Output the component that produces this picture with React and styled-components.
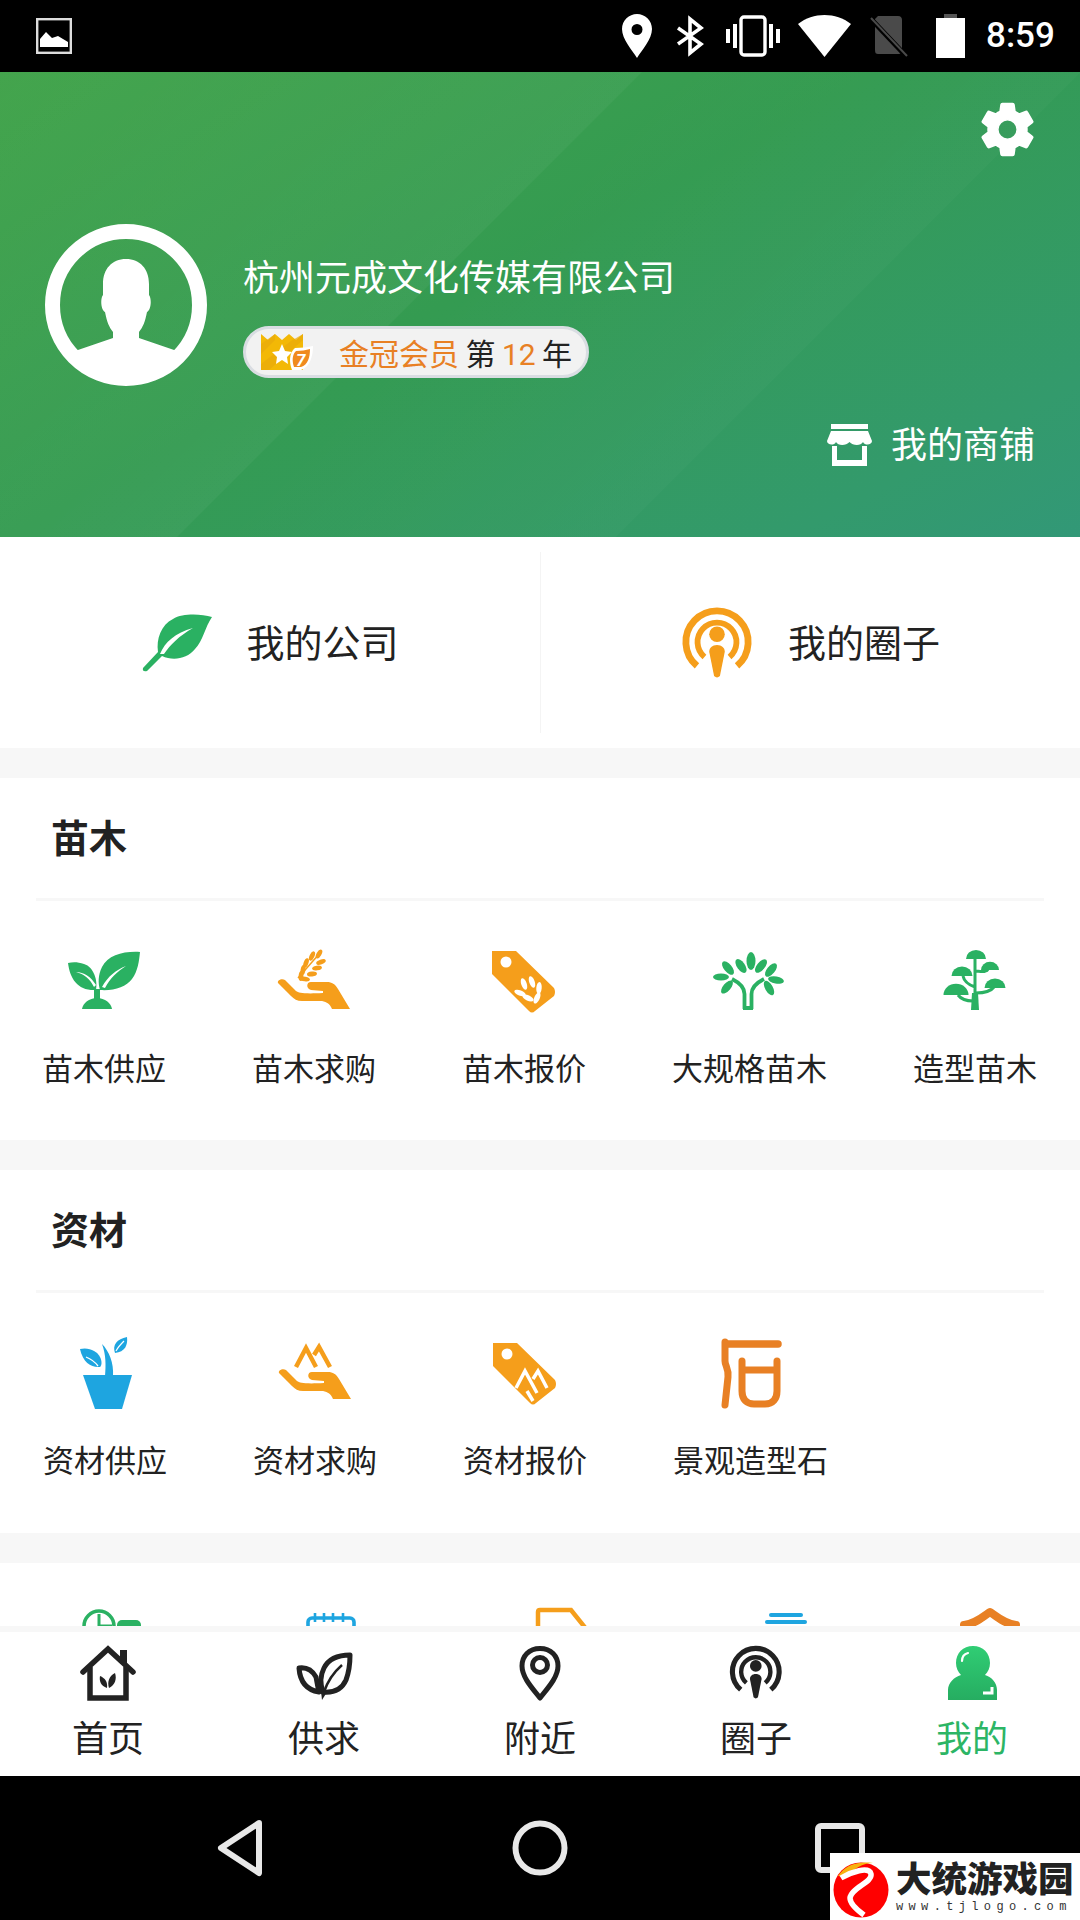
import React from "react";
import styled, { createGlobalStyle } from "styled-components";

const GREEN = "#2ab162";
const ORANGE = "#f59e1b";
const BLUE = "#1ea5e0";
const DEEP = "#e88024";
const INK = "#222222";

const Global = createGlobalStyle`
  html, body { margin: 0; padding: 0; background: #000; }
  * { box-sizing: border-box; }
  body { font-family: Roboto, "Noto Sans CJK SC", sans-serif; }
`;

const Page = styled.div`
  position: relative;
  width: 1080px;
  height: 1920px;
  display: flex;
  flex-direction: column;
  overflow: hidden;
  background: #f7f7f7;
  color: ${INK};
`;

const StatusBar = styled.div`
  height: 72px;
  flex: none;
  background: #000;
  display: flex;
  align-items: center;
  padding: 0 25px 0 36px;
`;
const StatusRight = styled.div`
  margin-left: auto;
  display: flex;
  align-items: center;
`;
const Glyph = styled.svg`
  display: block;
  flex: none;
  overflow: visible;
  margin-left: ${(p) => p.$ml || 0}px;
`;
const Clock = styled.span`
  margin-left: 21px;
  color: #fff;
  font-size: 35px;
  font-weight: 500;
  line-height: 40px;
  width: 69px;
`;

const Header = styled.header`
  height: 465px;
  flex: none;
  display: flex;
  flex-direction: column;
  padding: 30px 45px 0;
  color: #fff;
  background:
    linear-gradient(135deg, rgba(255,255,255,.005) 0%, rgba(255,255,255,.04) 41.5%, rgba(255,255,255,0) 41.6%, rgba(255,255,255,.02) 69.9%, rgba(255,255,255,0) 70%),
    linear-gradient(152deg, #43a44c 0%, #349b51 45%, #339a6c 85%, #329877 100%);
`;
const GearWrap = styled.div`
  align-self: flex-end;
  height: 55px;
`;
const Profile = styled.div`
  margin-top: 67px;
  display: flex;
  gap: 36px;
`;
const ProfileText = styled.div`
  padding-top: 30px;
  display: flex;
  flex-direction: column;
  align-items: flex-start;
`;
const CompanyName = styled.div`
  font-size: 36px;
  line-height: 50px;
`;
const Badge = styled.div`
  margin-top: 22px;
  height: 52px;
  width: 346px;
  border: 3px solid #d9dde2;
  border-radius: 26px;
  background: #f2f2f2;
  display: flex;
  align-items: center;
  padding-left: 15px;
  font-size: 30px;
  color: ${INK};
`;
const BadgeText = styled.span`
  margin-left: 26px;
  margin-bottom: 1px;
  white-space: pre;
  word-spacing: -1px;
`;
const Hot = styled.span`
  color: ${DEEP};
`;
const ShopRow = styled.div`
  margin-top: 37px;
  align-self: flex-end;
  display: flex;
  align-items: center;
  gap: 19px;
  font-size: 36px;
  line-height: 42px;
`;
const ShopLabel = styled.span`
  margin-top: 2px;
`;

const Scroll = styled.main`
  flex: 1;
  min-height: 0;
  overflow: hidden;
  display: flex;
  flex-direction: column;
  gap: 30px;
`;
const TopLinks = styled.section`
  display: grid;
  grid-template-columns: 1fr 1fr;
  height: 211px;
  flex: none;
  padding: 15px 0;
  background: #fff;
`;
const TopLink = styled.div`
  display: flex;
  align-items: center;
  justify-content: center;
  gap: 35px;
  font-size: 38px;
  color: ${INK};
  border-left: ${(p) => (p.$divided ? "1px solid #f4f4f4" : "none")};
`;
const TopLabel = styled.span`
  margin-bottom: 4px;
`;

const Section = styled.section`
  flex: none;
  background: #fff;
  height: ${(p) => p.$h}px;
`;
const SectionHead = styled.h2`
  margin: 0 36px;
  height: 123px;
  padding: 0 0 5px 15px;
  display: flex;
  align-items: center;
  border-bottom: 3px solid #f7f7f7;
  font-size: 38px;
  font-weight: 700;
  color: ${INK};
`;
const Items = styled.div`
  display: flex;
  gap: 86px;
  padding: 40px 0 0 ${(p) => p.$left}px;
`;
const Item = styled.div`
  display: flex;
  flex-direction: column;
  align-items: center;
  gap: 29px;
  font-size: 31px;
  line-height: 40px;
  white-space: nowrap;
  color: ${INK};
`;
const CutSection = styled.section`
  flex: none;
  height: 200px;
  background: #fff;
  display: flex;
  padding: 37px 0 0 72px;
`;
const CutCell = styled.div`
  margin-left: ${(p) => p.$gap}px;
`;

const TabBar = styled.nav`
  flex: none;
  height: 150px;
  background: #fff;
  border-top: 6px solid #f7f7f7;
  display: grid;
  grid-template-columns: repeat(5, 1fr);
`;
const Tab = styled.div`
  display: flex;
  flex-direction: column;
  align-items: center;
  padding-top: 8px;
  font-size: 36px;
  line-height: 44px;
  color: ${(p) => (p.$active ? "#2cb565" : INK)};
`;
const TabLabel = styled.span`
  margin-top: 14px;
`;

const NavBar = styled.div`
  flex: none;
  height: 144px;
  background: #000;
  display: grid;
  grid-template-columns: repeat(3, 300px);
  justify-content: center;
  justify-items: center;
  align-items: center;
`;

const Watermark = styled.div`
  position: absolute;
  right: 0;
  bottom: 0;
  width: 250px;
  height: 67px;
  background: #fff;
  display: flex;
  padding: 7px 0 0 3px;
`;
const MarkText = styled.div`
  margin-left: 7px;
  display: flex;
  flex-direction: column;
`;
const MarkName = styled.div`
  font-size: 35.5px;
  line-height: 40px;
  font-weight: 900;
  white-space: nowrap;
  color: #222;
  width: 178px;
`;
const MarkUrl = styled.div`
  font-family: "Liberation Mono", monospace;
  font-size: 12px;
  line-height: 14px;
  letter-spacing: 5.35px;
  color: #333;
  white-space: nowrap;
`;

const Icon = ({ s = 80, vb, children, w, h, ml }) => (
  <Glyph width={w || s} height={h || s} viewBox={vb || `0 0 ${w || s} ${h || s}`} $ml={ml}>
    {children}
  </Glyph>
);

const Grains = ({ pts, fill, rx = 6, ry = 2.7 }) =>
  pts.map(([x, y, a], i) => (
    <ellipse key={i} cx={x} cy={y} rx={rx} ry={ry} fill={fill} transform={`rotate(${a} ${x} ${y})`} />
  ));

const HandPath = ({ dy = 0 }) => (
  <path
    transform={`translate(0 ${dy})`}
    fill={ORANGE}
    d="M4 42C3 39 8 37 11 39L22 50C25 52 30 53 49 52L49 50L37 49C32 48 32 41 37 41L53 41C58 41 61 43 64 48L76 68L58 68C56 63 53 61 48 60L28 60C23 60 20 58 17 55Z"
  />
);

const Seedling = () => (
  <Icon>
    <g fill={GREEN}>
      <path d="M76 11C60 10 44 14 38 26C34 34 34 42 36 49C50 50 62 46 68 38C74 30 75 20 76 11Z" />
      <path d="M4 22C6 38 14 50 32 49C34 40 30 26 20 23C14 21 9 21 4 22Z" />
      <rect x="30" y="48" width="6" height="10" />
      <path d="M18 68C19 62 25 57 33 57C41 57 47 62 48 68Z" />
    </g>
    <path d="M38 46C44 35 52 29 62 25C53 31 46 37 41 47Z" fill="#fff" />
    <path d="M30 46C26 38 20 33 12 31C20 31 27 36 32 44Z" fill="#fff" />
  </Icon>
);
const WheatHand = () => (
  <Icon>
    <HandPath />
    <path d="M24 37L46 12" stroke={ORANGE} strokeWidth="1.5" />
    <Grains
      fill={ORANGE}
      rx={5}
      ry={2.4}
      pts={[
        [45, 13, -60], [38, 15, -65], [47, 21, -20], [32, 22, -70], [43, 27, -10],
        [29, 29, -80], [38, 33, -5], [27, 35, -85], [31, 38, 10],
      ]}
    />
  </Icon>
);
const TagShape = () => (
  <>
    <path fill={ORANGE} d="M8 10H32L70 47Q72 51 70 55L51 70Q48 73 45 70L8 33Z" />
    <circle cx="22" cy="21" r="5.5" fill="#fff" />
  </>
);
const WheatTag = () => (
  <Icon>
    <TagShape />
    <Grains
      fill="#fff"
      pts={[[40, 43, 70], [48, 41, 70], [36, 52, 20], [55, 47, 95], [44, 57, 25], [53, 57, 115]]}
    />
  </Icon>
);
const Tree = () => (
  <Icon>
    <g transform="translate(-2 0)">
      <g fill={GREEN}>
        {[
          [43, 20, 90, 9, 4.5], [33, 25, 55, 8, 4], [53, 25, -50, 8, 4], [20, 27, 50, 8, 4],
          [63, 29, -50, 8, 4], [13, 36, 0, 8, 3.5], [68, 39, 10, 8, 3.5], [19, 46, -50, 8, 3.8], [61, 47, 60, 8, 3.8],
        ].map(([x, y, a, rx, ry], i) => (
          <ellipse key={i} cx={x} cy={y} rx={rx} ry={ry} transform={`rotate(${a} ${x} ${y})`} />
        ))}
      </g>
      <path
        d="M36.5 68V53C36.5 45 30 41 24 38M43.500 68V53C43.500 45 50 41 56 38M35 67H45"
        fill="none"
        stroke={GREEN}
        strokeWidth="3.8"
      />
    </g>
  </Icon>
);
const Cap = ({ x, y, w }) => (
  <path d={`M${x - w / 2} ${y}A${w / 2} ${w / 2.2} 0 0 1 ${x + w / 2} ${y}Z`} fill={GREEN} />
);
const ShapedTree = () => (
  <Icon>
    <Cap x={41} y={18} w={20} />
    <Cap x={55} y={29} w={18} />
    <Cap x={27} y={35} w={21} />
    <Cap x={60} y={47} w={21} />
    <Cap x={21} y={54} w={25} />
    <path
      d="M40 18V56M40 30C44 30 52 32 53 28M40 46C34 44 29 40 28 35M41 52C48 52 56 50 59 46M38 60C32 60 26 58 23 54"
      fill="none"
      stroke={GREEN}
      strokeWidth="3"
    />
    <path d="M37 52H43L44 69H36Z" fill={GREEN} />
  </Icon>
);
const Pot = () => (
  <Icon>
    <g fill={BLUE}>
      <path d="M18 42H67L57 76H30Z" />
      <path d="M37 11C44 18 49 30 48 43H40C41 32 41 22 37 11Z" />
      <path d="M15 16C24 14 32 18 35 24C37 28 37 32 35 34C27 35 18 30 15 16Z" />
      <path d="M62 4C63 12 60 19 50 20C47 12 52 6 62 4Z" />
    </g>
    <path d="M21 24C26 26 30 29 33 33" stroke="#fff" strokeWidth="1.3" fill="none" />
    <path d="M59 8C56 11 53 14 51 18" stroke="#fff" strokeWidth="1.2" fill="none" />
  </Icon>
);
const RockHand = () => (
  <Icon>
    <HandPath dy={-2} />
    <path
      d="M21 34L31 15L41 34M39 22L44 14L55 34"
      fill="none"
      stroke={ORANGE}
      strokeWidth="4.5"
    />
  </Icon>
);
const RockTag = () => (
  <Icon>
    <TagShape />
    <path
      d="M31 55L40 38L52 60M48 46L53 38L62 55M42 58L48 68"
      fill="none"
      stroke="#fff"
      strokeWidth="3.5"
    />
  </Icon>
);
const Stone = () => (
  <Icon>
    <g fill="none" stroke={DEEP} strokeLinecap="round" strokeLinejoin="round">
      <path strokeWidth="7.5" d="M15 11H67" />
      <path strokeWidth="7" d="M14 9V28C14 33 18 36 17 44L14 72" />
      <path strokeWidth="7" d="M31 28V58C31 67 36 71 43 71H54C62 71 66 66 66 58V28" />
      <path strokeWidth="7" d="M33 37H64" />
    </g>
  </Icon>
);

const sections = [
  {
    title: "苗木",
    height: 362,
    left: 42,
    items: [
      ["苗木供应", Seedling],
      ["苗木求购", WheatHand],
      ["苗木报价", WheatTag],
      ["大规格苗木", Tree],
      ["造型苗木", ShapedTree],
    ],
  },
  {
    title: "资材",
    height: 363,
    left: 43,
    items: [
      ["资材供应", Pot],
      ["资材求购", RockHand],
      ["资材报价", RockTag],
      ["景观造型石", Stone],
    ],
  },
];

const PodcastArt = ({ color }) => (
  <>
    <g fill="none" stroke={color}>
      <path strokeWidth="7" d="M15.4 60.5A32 32 0 1 1 56.6 60.5" />
      <path strokeWidth="6" d="M23.1 51.3A20 20 0 1 1 48.9 51.3" />
    </g>
    <circle cx="36" cy="28" r="8" fill={color} />
    <path fill={color} d="M36 39C31 39 28 42 28 46L33 71Q36 74 39 71L44 46C44 42 41 39 36 39Z" />
  </>
);

const HomeTab = () => (
  <Icon s={64}>
    <g fill="none" stroke={INK} strokeWidth="5.5">
      <path d="M7 32L32 9L57 32" strokeLinecap="round" />
      <path d="M14 27V58H50V27" />
    </g>
    <rect x="44" y="10" width="7" height="14" fill={INK} />
    <path fill={INK} d="M33 48C31 42 33 36 39 33C41 39 39 45 33 48ZM31 48C25 46 23 41 24 36C29 38 32 42 31 48Z" />
  </Icon>
);
const SupplyTab = () => (
  <Icon s={64}>
    <g fill="none" stroke={INK} strokeWidth="5" strokeLinejoin="round">
      <path d="M58 15C44 15 36 20 32 28C28 36 28 44 31 52C42 53 50 49 54 40C57 32 58 23 58 15Z" />
      <path d="M7 28C14 27 20 30 24 37C25 42 26 48 27 52C15 50 8 42 7 28Z" />
    </g>
    <path d="M32 52C36 40 42 32 50 25" stroke={INK} strokeWidth="2.5" fill="none" />
    <path d="M29 51L35 52L30 60Z" fill={INK} />
  </Icon>
);
const PinTab = () => (
  <Icon s={64}>
    <g fill="none" stroke={INK} strokeWidth="5">
      <path d="M32 8.500C21 8.500 14 16 14 26C14 38 26 50 32 58C38 50 50 38 50 26C50 16 43 8.500 32 8.500Z" strokeLinejoin="round" />
      <circle cx="32" cy="25" r="7.500" />
    </g>
  </Icon>
);
const CircleTab = () => (
  <Icon s={64}>
    <g transform="translate(5.500 5.500) scale(.73)">
      <PodcastArt color={INK} />
    </g>
  </Icon>
);
const MeTab = () => (
  <Icon s={64}>
    <defs>
      <linearGradient id="meGrad" x1="0" y1="0" x2="0" y2="1">
        <stop offset="0" stopColor="#30cd74" />
        <stop offset="1" stopColor="#26ad61" />
      </linearGradient>
    </defs>
    <path
      fill="url(#meGrad)"
      d="M33 6C43 6 50 13 50 23C50 28 48 32 45 35C52 37 57 43 57 50V60H8V50C8 43 14 37 21 35C18 32 16 28 16 23C16 13 23 6 33 6Z"
    />
    <path d="M22 21C22 17 24 14 28 13" stroke="#fff" strokeWidth="2.2" fill="none" strokeLinecap="round" />
    <path d="M43 53H52V47" stroke="#fff" strokeWidth="3" fill="none" />
  </Icon>
);
const tabs = [
  ["首页", HomeTab],
  ["供求", SupplyTab],
  ["附近", PinTab],
  ["圈子", CircleTab],
  ["我的", MeTab, true],
];

export default function App() {
  return (
    <Page>
      <Global />
      <StatusBar>
        <Icon w={36} h={36}>
          <rect x="1.2" y="1.2" width="33.6" height="33.6" fill="none" stroke="#ddd" strokeWidth="2.4" />
          <path d="M4 29V21L10 14L16 20L22 18L32 24V29Z" fill="#fff" />
        </Icon>
        <StatusRight>
          <Icon w={30} h={44}>
            <path
              fillRule="evenodd"
              fill="#fff"
              d="M15 0C7 0 0 6.500 0 15C0 25 10 36 15 44C20 36 30 25 30 15C30 6.500 23 0 15 0ZM15 10A5.500 5.500 0 1 1 15 21A5.500 5.500 0 0 1 15 10Z"
            />
          </Icon>
          <Icon w={26} h={36} ml={25}>
            <path d="M1 10L24 26L13 35V1L24 10L1 26" fill="none" stroke="#fff" strokeWidth="3.6" />
          </Icon>
          <Icon w={54} h={42} ml={23}>
            <rect x="15" y="2" width="24" height="38" rx="3" fill="none" stroke="#fff" strokeWidth="3.4" />
            <path d="M0 14H4V28H0ZM7 9H11V33H7ZM43 9H47V33H43ZM50 14H54V28H50Z" fill="#fff" />
          </Icon>
          <Icon w={53} h={42} ml={18}>
            <path d="M0 9C15 -3 38 -3 53 9L26.500 42Z" fill="#fff" />
          </Icon>
          <Icon w={38} h={42} ml={19}>
            <path d="M8 1H28C31 1 32 3 32 5V35C32 38 31 39 28 39H8C6 39 5 38 5 35V4Z" fill="#4a4a4a" />
            <path d="M1 4L36 41" stroke="#000" strokeWidth="5" />
            <path d="M1 3L37 41" stroke="#4a4a4a" strokeWidth="2" />
          </Icon>
          <Icon w={29} h={44} ml={28}>
            <path d="M8 0H21V4H8Z" fill="#555" />
            <path d="M0 4H29V44H0Z" fill="#fff" />
          </Icon>
          <Clock>8:59</Clock>
        </StatusRight>
      </StatusBar>

      <Header>
        <GearWrap>
          <Icon s={55} vb="1.8 1.8 20.4 20.4">
            <path
              fill="#fff"
              stroke="#fff"
              strokeWidth=".6"
              d="M19.14 12.94c.04-.3.06-.61.06-.94 0-.32-.02-.64-.07-.94l2.03-1.58c.18-.14.23-.41.12-.61l-1.92-3.32c-.12-.22-.37-.29-.59-.22l-2.39.96c-.5-.38-1.03-.7-1.62-.94l-.36-2.54c-.04-.24-.24-.41-.48-.41h-3.84c-.24 0-.43.17-.47.41l-.36 2.54c-.59.24-1.13.57-1.62.94l-2.39-.96c-.22-.08-.47 0-.59.22L2.74 8.87c-.12.21-.08.47.12.61l2.03 1.58c-.05.3-.09.63-.09.94s.02.64.07.94l-2.03 1.58c-.18.14-.23.41-.12.61l1.92 3.32c.12.22.37.29.59.22l2.39-.96c.5.38 1.03.7 1.62.94l.36 2.54c.05.24.24.41.48.41h3.84c.24 0 .44-.17.47-.41l.36-2.54c.59-.24 1.13-.56 1.62-.94l2.39.96c.22.08.47 0 .59-.22l1.92-3.32c.12-.22.07-.47-.12-.61l-2.01-1.58zM12 15.6c-1.98 0-3.6-1.62-3.6-3.6s1.62-3.6 3.6-3.6 3.6 1.62 3.6 3.6-1.62 3.6-3.6 3.6z"
            />
          </Icon>
        </GearWrap>
        <Profile>
          <Icon s={162}>
            <defs>
              <clipPath id="avClip">
                <circle cx="81" cy="81" r="74" />
              </clipPath>
            </defs>
            <circle cx="81" cy="81" r="73.5" fill="none" stroke="#fff" strokeWidth="15" />
            <path
              clipPath="url(#avClip)"
              fill="#fff"
              d="M81 35C67 35 58 45 58 60V71C55 75 56 86 60 88C62 98 64 103 68 108V114L30 127L20 162H142L132 127L94 114V108C98 103 100 98 102 88C106 86 107 75 104 71V60C104 45 95 35 81 35Z"
            />
          </Icon>
          <ProfileText>
            <CompanyName>杭州元成文化传媒有限公司</CompanyName>
            <Badge>
              <Icon w={52} h={36}>
                <path d="M0 0L7 6L14 0L21 6L28 0L35 6L42 0V36H0Z" fill="#f3b806" />
                <path d="M0 10L14 0V6L0 20ZM0 30L30 7L42 0V6L8 36H0Z" fill="#e8a90b" opacity=".7" />
                <path d="M21 10L24 17L31 18L26 23L27 30L21 26L15 30L16 23L11 18L18 17Z" fill="#fff" />
                <path d="M34 14C40 14 47 13 52 12C52 22 49 33 40 36H31C28 28 28 19 34 14Z" fill="#fff" />
                <path d="M35 17C40 17 45 16 49 15C49 23 47 31 40 33H33C31 27 31 21 35 17Z" fill="#f08a1e" />
                <text x="35" y="32" fontSize="17" fontWeight="700" fontStyle="italic" fill="#fff">7</text>
              </Icon>
              <BadgeText>
                <Hot>金冠会员</Hot> 第 <Hot>12</Hot> 年
              </BadgeText>
            </Badge>
          </ProfileText>
        </Profile>
        <ShopRow>
          <Icon w={45} h={42}>
            <path d="M4 0H41V5H4Z" fill="#fff" />
            <path
              fill="#fff"
              d="M4 7H41L45 17C45 21 38 22 36 18C34 22 26 22 22.500 18C19 22 11 22 9 18C7 22 0 21 0 17Z"
            />
            <path d="M5 22H10V36H35V22H40V42H5Z" fill="#fff" />
          </Icon>
          <ShopLabel>我的商铺</ShopLabel>
        </ShopRow>
      </Header>

      <Scroll>
        <TopLinks>
          <TopLink>
            <Icon w={70} h={60}>
              <g transform="translate(2 0)">
                <path
                  fill={GREEN}
                  d="M69 4C58 1 40 0 30 6C18 12 13 26 15 39L0 55Q-1 59 4 58L19 43C30 48 44 46 52 36C60 28 62 14 69 4Z"
                />
                <path fill="#fff" d="M17 41C22 29 32 20 50 15C36 23 27 32 21 41Z" />
              </g>
            </Icon>
            <TopLabel>我的公司</TopLabel>
          </TopLink>
          <TopLink $divided>
            <Icon s={72} vb="0 0 72 74">
              <PodcastArt color={ORANGE} />
            </Icon>
            <TopLabel>我的圈子</TopLabel>
          </TopLink>
        </TopLinks>

        {sections.map((s) => (
          <Section key={s.title} $h={s.height}>
            <SectionHead>{s.title}</SectionHead>
            <Items $left={s.left}>
              {s.items.map(([label, Art]) => (
                <Item key={label}>
                  <Art />
                  {label}
                </Item>
              ))}
            </Items>
          </Section>
        ))}

        <CutSection>
          <CutCell $gap={0}>
            <Icon>
              <circle cx="27" cy="26" r="15" fill="none" stroke={GREEN} strokeWidth="3.5" />
              <path d="M27 14V26H40" fill="none" stroke={GREEN} strokeWidth="3" />
              <rect x="45" y="20" width="24" height="24" rx="5" fill={GREEN} />
            </Icon>
          </CutCell>
          <CutCell $gap={139}>
            <Icon>
              <rect x="17" y="18" width="46" height="40" rx="4" fill="none" stroke={BLUE} strokeWidth="3.6" />
              <path d="M24 13V22M33 13V22M42 13V22M52 13V22" stroke={BLUE} strokeWidth="2.6" />
            </Icon>
          </CutCell>
          <CutCell $gap={150}>
            <Icon>
              <path d="M17 50V12Q17 10 19 10H50L66 30V50" fill="none" stroke={ORANGE} strokeWidth="4.500" />
            </Icon>
          </CutCell>
          <CutCell $gap={145}>
            <Icon>
              <rect x="23" y="13" width="34" height="4" rx="2" fill={BLUE} />
              <rect x="19" y="20" width="42" height="4" rx="2" fill={BLUE} />
            </Icon>
          </CutCell>
          <CutCell $gap={124}>
            <Icon>
              <path
                d="M14 25C25 24 33 17 40 12C47 17 55 24 66 25"
                fill="none"
                stroke={DEEP}
                strokeWidth="8"
                strokeLinecap="round"
                strokeLinejoin="round"
              />
            </Icon>
          </CutCell>
        </CutSection>
      </Scroll>

      <TabBar>
        {tabs.map(([label, Art, active]) => (
          <Tab key={label} $active={active}>
            <Art />
            <TabLabel>{label}</TabLabel>
          </Tab>
        ))}
      </TabBar>

      <NavBar>
        <Icon w={50} h={60}>
          <path
            d="M44 5L6 30L44 55Z"
            fill="none"
            stroke="#e8e8e8"
            strokeWidth="6"
            strokeLinejoin="round"
          />
        </Icon>
        <Icon s={60}>
          <circle cx="30" cy="30" r="24.500" fill="none" stroke="#e8e8e8" strokeWidth="6" />
        </Icon>
        <Icon s={60}>
          <rect x="8" y="8" width="44" height="44" rx="3" fill="none" stroke="#e8e8e8" strokeWidth="6" />
        </Icon>
      </NavBar>

      <Watermark>
        <Icon s={56}>
          <circle cx="28" cy="30" r="27.500" fill="#f00" />
          <path d="M5 16C12 6 22 1 40 3C30 3 20 9 14 17C11 17 8 16 5 16Z" fill="#f7b20f" />
          <path
            d="M8 18C18 12 36 6 38 14C40 22 18 28 17 38C17 44 24 50 31 55"
            fill="none"
            stroke="#fff"
            strokeWidth="5.500"
          />
        </Icon>
        <MarkText>
          <MarkName>大统游戏园</MarkName>
          <MarkUrl>www.tjlogo.com</MarkUrl>
        </MarkText>
      </Watermark>
    </Page>
  );
}
